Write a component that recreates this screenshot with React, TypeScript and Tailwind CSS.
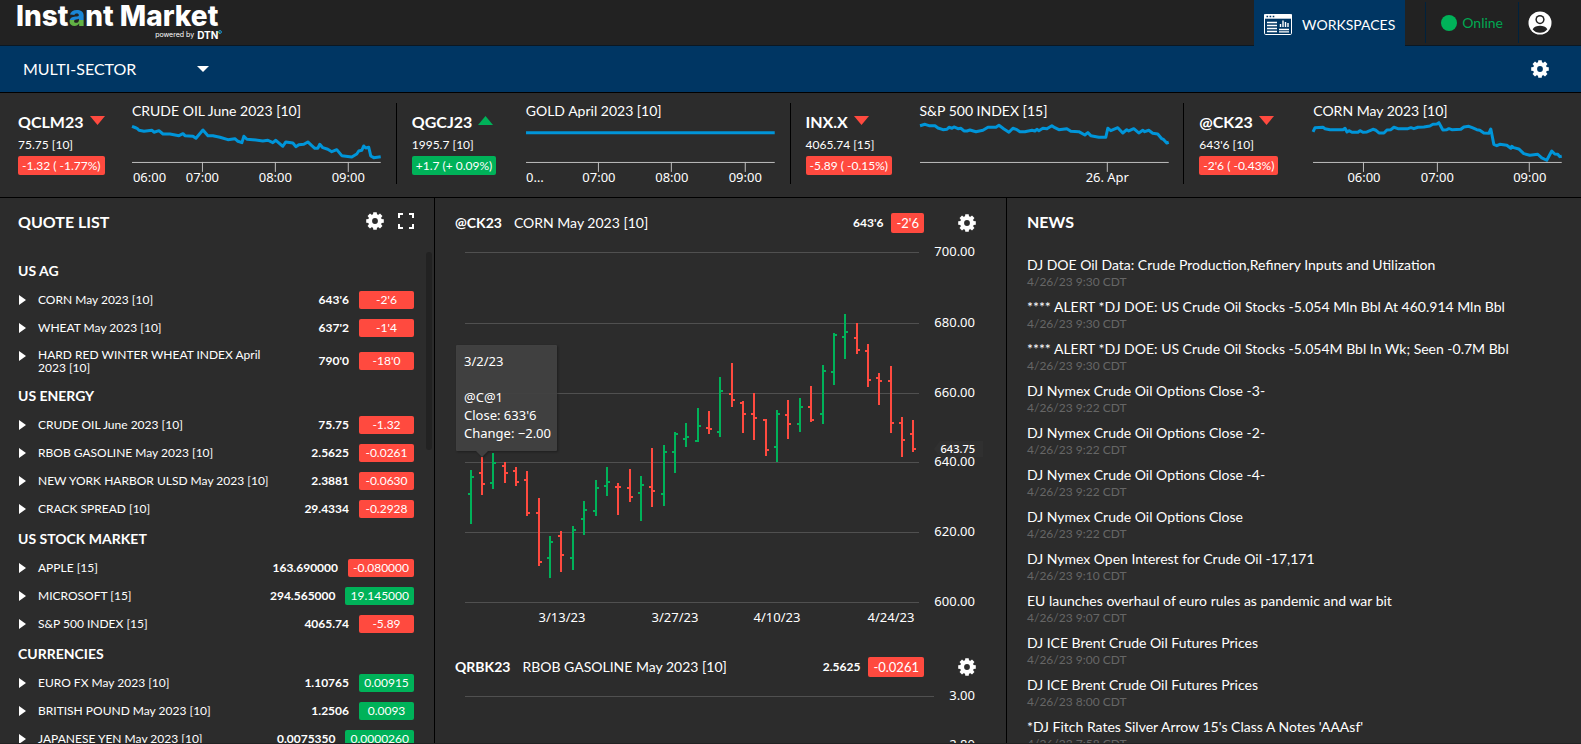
import clsx from "clsx";
import { useState } from "react";

type Spark = {
  points: string;
  ticks: number[];
  labels: { x: number; text: string; anchor?: "start" | "middle" }[];
};

type Ticker = {
  symbol: string;
  title: string;
  price: string;
  change: string;
  up?: boolean;
  spark: Spark;
};

const TICKERS: Ticker[] = [
  {
    symbol: "QCLM23",
    title: "CRUDE OIL June 2023 [10]",
    price: "75.75 [10]",
    change: "-1.32 ( -1.77%)",
    spark: {
      points:
        "0,8.3 3,9.5 5,10.3 7,12.3 12,13.3 20,12.3 22,14.3 27,12.7 31,16 38,16 47,17.7 51,15.7 53,17.7 61,18.3 64,20.3 71,12 76,17.7 81,17.7 88,19.3 96,21.7 103,20.7 106,23.3 110,24.7 112,18.3 115,21.3 121,21.7 131,23 136,22.3 141,24.7 144,22.3 151,28.3 154,24 161,25 164,28.7 167,26.7 172,26.3 176,24 180,27.7 183,30.3 186,30.3 188,26.3 191,29.7 196,31.3 200,33.7 205,31.7 210,37.7 220,39 225,36 227,33 230,32.3 232,28 234,30 237,29.3 239,38 242,39.7 249,38.7",
      ticks: [70.5, 143.5, 216.5],
      labels: [
        { x: 17.5, text: "06:00" },
        { x: 70.5, text: "07:00" },
        { x: 143.5, text: "08:00" },
        { x: 216.5, text: "09:00" },
      ],
    },
  },
  {
    symbol: "QGCJ23",
    title: "GOLD April 2023 [10]",
    price: "1995.7 [10]",
    change: "+1.7 (+ 0.09%)",
    up: true,
    spark: {
      points: "0,14.7 249,14.7",
      ticks: [72.5, 145.5, 219.5],
      labels: [
        { x: 0, text: "0…", anchor: "start" },
        { x: 73, text: "07:00" },
        { x: 146, text: "08:00" },
        { x: 219.5, text: "09:00" },
      ],
    },
  },
  {
    symbol: "INX.X",
    title: "S&P 500 INDEX [15]",
    price: "4065.74 [15]",
    change: "-5.89 ( -0.15%)",
    spark: {
      points:
        "0,7.7 5,6.3 9,7.7 15,7.7 18,10 23,11.7 27,11.3 29,9.3 32,10.3 34,9 38,10.7 41,10.3 44,13 47,13 50,12 56,13.7 63,12.3 68,9.3 76,9.3 79,7.3 84,11 89,14.3 93,10.3 97,11.7 100,13.7 105,13.7 112,12.3 115,13 117,11.3 119,12.7 123,10.3 127,10.7 132,7.7 135,9.7 139,11.7 147,10.7 151,13.3 159,13.7 165,17 168,14.7 171,17.7 179,19.3 186,19.3 188,10.3 191,12.7 198,9.7 203,15 207,11.7 209,13 214,10.7 219,15 223,12.3 225,13.7 229,12.3 233,15.3 238,16 242,20.7 244,21.7 247,25 249,24.3",
      ticks: [187.5],
      labels: [{ x: 187.5, text: "26. Apr" }],
    },
  },
  {
    symbol: "@CK23",
    title: "CORN May 2023 [10]",
    price: "643'6 [10]",
    change: "-2'6 ( -0.43%)",
    spark: {
      points:
        "0,14 2,9.7 10,9.3 12,10.7 17,11.7 30,11.7 32,10.3 34,14 36,12.7 39,14.3 45,14.3 47,12.7 50,14.3 54,14 60,11.3 63,12.3 66,15 71,15 74,12 78,11.7 81,9.3 85,10.7 95,10.7 98,9.7 101,10.7 105,9.3 111,9 117,8 120,6.3 124,6 126,4.7 130,12 134,11.7 136,10.7 139,11.7 148,11.3 151,9 156,8.3 160,10 164,11.7 167,12.3 171,15 176,15.3 178,11 181,26.3 184,27.7 187,26.3 194,27.3 198,30.3 199,28.3 201,29.7 206,31 211,35.7 217,37.3 225,36.3 229,40 234,42.3 239,33 242,36 245,36.3 247,38.7 249,38.3",
      ticks: [50.5, 124.5, 216.5],
      labels: [
        { x: 51, text: "06:00" },
        { x: 124.5, text: "07:00" },
        { x: 217, text: "09:00" },
      ],
    },
  },
];

const QUOTES = [
  {
    group: "US AG",
    rows: [
      ["CORN May 2023 [10]", "643'6", "-2'6"],
      ["WHEAT May 2023 [10]", "637'2", "-1'4"],
      ["HARD RED WINTER WHEAT INDEX April 2023 [10]", "790'0", "-18'0"],
    ],
  },
  {
    group: "US ENERGY",
    rows: [
      ["CRUDE OIL June 2023 [10]", "75.75", "-1.32"],
      ["RBOB GASOLINE May 2023 [10]", "2.5625", "-0.0261"],
      ["NEW YORK HARBOR ULSD May 2023 [10]", "2.3881", "-0.0630"],
      ["CRACK SPREAD [10]", "29.4334", "-0.2928"],
    ],
  },
  {
    group: "US STOCK MARKET",
    rows: [
      ["APPLE [15]", "163.690000", "-0.080000"],
      ["MICROSOFT [15]", "294.565000", "19.145000"],
      ["S&P 500 INDEX [15]", "4065.74", "-5.89"],
    ],
  },
  {
    group: "CURRENCIES",
    rows: [
      ["EURO FX May 2023 [10]", "1.10765", "0.00915"],
      ["BRITISH POUND May 2023 [10]", "1.2506", "0.0093"],
      ["JAPANESE YEN May 2023 [10]", "0.0075350", "0.0000260"],
    ],
  },
];

const NEWS = [
  ["DJ DOE Oil Data: Crude Production,Refinery Inputs and Utilization", "4/26/23 9:30 CDT"],
  ["**** ALERT *DJ DOE: US Crude Oil Stocks -5.054 Mln Bbl At 460.914 Mln Bbl", "4/26/23 9:30 CDT"],
  ["**** ALERT *DJ DOE: US Crude Oil Stocks -5.054M Bbl In Wk; Seen -0.7M Bbl", "4/26/23 9:30 CDT"],
  ["DJ Nymex Crude Oil Options Close -3-", "4/26/23 9:22 CDT"],
  ["DJ Nymex Crude Oil Options Close -2-", "4/26/23 9:22 CDT"],
  ["DJ Nymex Crude Oil Options Close -4-", "4/26/23 9:22 CDT"],
  ["DJ Nymex Crude Oil Options Close", "4/26/23 9:22 CDT"],
  ["DJ Nymex Open Interest for Crude Oil -17,171", "4/26/23 9:10 CDT"],
  ["EU launches overhaul of euro rules as pandemic and war bit", "4/26/23 9:07 CDT"],
  ["DJ ICE Brent Crude Oil Futures Prices", "4/26/23 9:00 CDT"],
  ["DJ ICE Brent Crude Oil Futures Prices", "4/26/23 8:00 CDT"],
  ["*DJ Fitch Rates Silver Arrow 15's Class A Notes 'AAAsf'", "4/26/23 7:58 CDT"],
];

// x, high, low, open, close (chart units, y grows downwards)
const BARS = [
  [471, 470, 524, 494, 477],
  [482, 457, 495, 473, 484],
  [493, 453, 489, 483, 463],
  [505, 462, 483, 466, 473],
  [516, 467, 486, 471, 482],
  [527, 471, 516, 480, 513],
  [539, 498, 566, 513, 562],
  [550, 536, 578, 558, 542],
  [561, 531, 572, 536, 555],
  [573, 526, 570, 558, 530],
  [584, 501, 535, 519, 510],
  [596, 480, 516, 511, 488],
  [607, 467, 496, 486, 482],
  [618, 483, 515, 487, 487],
  [630, 469, 502, 488, 497],
  [641, 476, 521, 493, 485],
  [652, 448, 507, 487, 491],
  [664, 445, 506, 494, 452],
  [675, 432, 473, 452, 434],
  [686, 423, 447, 439, 437],
  [698, 408, 442, 441, 426],
  [709, 411, 434, 428, 429],
  [720, 377, 437, 432, 391],
  [732, 363, 407, 394, 400],
  [743, 401, 433, 403, 414],
  [754, 393, 440, 414, 418],
  [766, 419, 456, 420, 450],
  [777, 410, 462, 447, 414],
  [788, 400, 439, 415, 424],
  [800, 398, 432, 424, 407],
  [811, 386, 422, 407, 420],
  [823, 365, 424, 414, 371],
  [834, 333, 385, 372, 335],
  [845, 314, 359, 337, 332],
  [857, 323, 354, 338, 350],
  [868, 344, 387, 351, 380],
  [879, 373, 405, 378, 381],
  [891, 366, 433, 381, 423],
  [902, 417, 457, 423, 440],
  [913, 420, 452, 434, 449],
];

const GRID = [
  { y: 252.5, label: "700.00" },
  { y: 323.5, label: "680.00" },
  { y: 393.5, label: "660.00" },
  { y: 462.5, label: "640.00" },
  { y: 532.5, label: "620.00" },
  { y: 602.5, label: "600.00" },
];

const GearIcon = () => (
  <svg viewBox="0 0 18 18" className="size-[18px]" aria-hidden="true">
    <circle cx="9" cy="9" r="4.9" fill="none" stroke="#fff" strokeWidth="4" />
    {[0, 45, 90, 135, 180, 225, 270, 315].map((a) => (
      <path key={a} d="M6.9 3 L7.3 0.2 H10.7 L11.1 3Z" fill="#fff" transform={`rotate(${a} 9 9)`} />
    ))}
  </svg>
);

const GearButton = ({ label }: { label: string }) => (
  <button aria-label={label} className="shrink-0 cursor-pointer">
    <GearIcon />
  </button>
);

function Header() {
  return (
    <header className="flex h-[46px] justify-between border-b border-[#0b1823] bg-[#222]">
      <a href="#" className="flex flex-col pl-[16px] text-white">
        <span className="pr-1 font-['Inter'] text-[28px] leading-[32px] font-extrabold">
          Inst
          <span className="bg-linear-to-b from-[#1b87d6] from-62% to-[#62b345] to-62% bg-clip-text text-transparent">
            a
          </span>
          nt Market
        </span>
        <span className="-mt-[2px] flex items-center justify-end gap-[3px] font-['Inter'] text-[7px] leading-[10px]">
          powered by
          <span className="flex items-start text-[10px] font-bold">
            DTN
            <svg viewBox="0 0 4 4" className="size-1" aria-hidden="true">
              <circle cx="2" cy="2" r="1.4" fill="none" stroke="#1b9ad6" strokeWidth="1" />
              <path d="M0.6 2 A1.4 1.4 0 0 0 2 3.4" fill="none" stroke="#62b345" />
            </svg>
          </span>
        </span>
      </a>
      <div className="flex">
        <a href="#" className="mr-5 flex h-[48px] items-center gap-[10px] bg-[#003663] px-[10px] text-[14px] text-white">
          <svg viewBox="0 0 28 21" className="h-[21px] w-7" fill="none" stroke="#fff" aria-hidden="true">
            <rect x="0.5" y="0.5" width="27" height="20" rx="1.2" />
            <path d="M0 2.5H28" strokeWidth="4.4" />
            <path d="M2.5 2.5h1.6M5.6 2.5h1.6M8.7 2.5h1.6" stroke="#003663" strokeWidth="1.4" />
            <path d="M3 8.5H13M3 11.5H13M3 14.5H13M3 17.5H13M15 15.5H25M15 17.8H25" strokeWidth="1.3" />
            <path d="M16.5 13V10M19 13V6.5M21.5 13V8M24 13V9" strokeWidth="1.4" />
          </svg>
          WORKSPACES
        </a>
        <div className="my-[2px] flex items-center gap-[5px] border-x border-[#00223d] px-[15px] text-[14px] text-[#00a852]">
          <span className="size-4 rounded-full bg-[#00b259]" />
          Online
        </div>
        <button aria-label="Account" className="mr-[29px] ml-[9px] cursor-pointer">
          <svg viewBox="0 0 24 24" className="size-6" aria-hidden="true">
            <circle cx="12" cy="12" r="11.5" fill="#fff" />
            <circle cx="12" cy="8.6" r="4.6" fill="#222" />
            <circle cx="12" cy="8.6" r="3.1" fill="#fff" />
            <path d="M4.6 18.2c1.6-2.6 4.4-3.4 7.4-3.4s5.8.8 7.4 3.4c-1.8 2.3-4.4 3.6-7.4 3.6s-5.6-1.3-7.4-3.6z" fill="#222" />
          </svg>
        </button>
      </div>
    </header>
  );
}

function WorkspaceBar() {
  const [workspace, setWorkspace] = useState("MULTI-SECTOR");

  return (
    <div className="flex h-[47px] items-center justify-between border-b border-black bg-[#003663] pr-8 pl-[23px]">
      <label className="flex items-center">
        <select
          aria-label="Workspace"
          value={workspace}
          onChange={(e) => setWorkspace(e.target.value)}
          className="w-[174px] cursor-pointer appearance-none bg-transparent text-[16px] text-white outline-none"
        >
          <option>MULTI-SECTOR</option>
        </select>
        <svg viewBox="0 0 12 6" className="h-[6px] w-3" aria-hidden="true">
          <path d="M0 0H12L6 6Z" fill="#fff" />
        </svg>
      </label>
      <GearButton label="Workspace settings" />
    </div>
  );
}

const Sparkline = ({ spark }: { spark: Spark }) => (
  <svg viewBox="0 0 249 66" className="w-full overflow-visible" aria-hidden="true">
    <polyline points={spark.points} fill="none" stroke="#0095d9" strokeWidth="3" strokeLinejoin="round" />
    <path d="M0 44.5H249" stroke="#c0c0c0" />
    {spark.ticks.map((x) => (
      <path key={x} d={`M${x} 44V54`} stroke="#c0c0c0" />
    ))}
    {spark.labels.map((l) => (
      <text
        key={l.text}
        x={l.x}
        y="64"
        textAnchor={l.anchor ?? "middle"}
        className="fill-white font-['Noto_Sans'] text-[13px]"
      >
        {l.text}
      </text>
    ))}
  </svg>
);

const TickerCell = ({ ticker }: { ticker: Ticker }) => (
  <li className="flex min-w-0 flex-1 border-r border-black pr-[15px] pl-[15px] last:border-r-0">
    <div className="flex w-[114px] shrink-0 flex-col items-start pt-2 text-[12px]">
      <div className="flex items-center gap-[6px] text-[16px] leading-[22px] font-bold">
        {ticker.symbol}
        <svg viewBox="0 0 15 9" className="mb-1 h-[9px] w-[15px]" aria-hidden="true">
          {ticker.up ? (
            <path d="M0 9H15L7.5 0Z" fill="#00b259" />
          ) : (
            <path d="M0 0H15L7.5 9Z" fill="#ff4a3f" />
          )}
        </svg>
      </div>
      <div className="leading-[23px]">{ticker.price}</div>
      <div
        className={clsx(
          "rounded-[2px] px-1 leading-[19px] whitespace-nowrap",
          ticker.up ? "bg-[#00b259]" : "bg-[#ff4a3f]"
        )}
      >
        {ticker.change}
      </div>
    </div>
    <div className="min-w-0 flex-1">
      <div className="h-[15px] text-[14px] leading-[16px] whitespace-nowrap">{ticker.title}</div>
      <Sparkline spark={ticker.spark} />
    </div>
  </li>
);

function QuoteRow({ name, price, change }: { name: string; price: string; change: string }) {
  return (
    <li className="flex min-h-7 text-[12px] leading-[13px]">
      <button aria-label={`Expand ${name}`} className="h-7 w-5 shrink-0 cursor-pointer">
        <svg viewBox="0 0 7 10" className="ml-px h-[10px] w-[7px]" aria-hidden="true">
          <path d="M0 0L7 5L0 10Z" fill="#fff" />
        </svg>
      </button>
      <div className="flex flex-1 items-center py-[6px]">
        <span className="max-w-[240px]">{name}</span>
      </div>
      <div className="flex items-center gap-[10px]">
        <span className="font-bold">{price}</span>
        <span
          className={clsx(
            "min-w-[55px] rounded-[2px] px-[5px] text-center leading-[18px]",
            change.startsWith("-") ? "bg-[#ff4a3f]" : "bg-[#00b259]"
          )}
        >
          {change}
        </span>
      </div>
    </li>
  );
}

function QuoteList() {
  return (
    <section className="relative w-[435px] shrink-0 overflow-hidden border-r border-black pr-5 pl-[18px]">
      <div className="flex h-[57px] items-start justify-between pt-[14px]">
        <h2 className="text-[16px] leading-[20px] font-bold">QUOTE LIST</h2>
        <div className="flex items-center gap-[14px]">
          <GearButton label="Quote list settings" />
          <button aria-label="Full screen" className="cursor-pointer">
            <svg viewBox="0 0 16 16" className="size-4" fill="none" stroke="#fff" strokeWidth="2" aria-hidden="true">
              <path d="M1 5V1H5M11 1H15V5M15 11V15H11M5 15H1V11" />
            </svg>
          </button>
        </div>
      </div>
      {QUOTES.map(({ group, rows }) => (
        <div key={group}>
          <h3 className="text-[14px] leading-[31px] font-bold">{group}</h3>
          <ul>
            {rows.map(([name, price, change]) => (
              <QuoteRow key={name} name={name} price={price} change={change} />
            ))}
          </ul>
        </div>
      ))}
      <div className="absolute top-[54px] right-[2px] h-[198px] w-[6px] rounded-full bg-[#222]" />
    </section>
  );
}

const ChartHeader = ({
  symbol,
  title,
  price,
  change,
}: {
  symbol: string;
  title: string;
  price: string;
  change: string;
}) => (
  <div className="flex h-5 items-center pr-[10px]">
    <h2 className="text-[14px] font-bold">{symbol}</h2>
    <span className="ml-3 flex-1 text-[14px]">{title}</span>
    <span className="mr-2 text-[12px] font-bold">{price}</span>
    <span className="mr-[34px] rounded-[2px] bg-[#ff4a3f] px-[5px] text-[13px] leading-[20px]">{change}</span>
    <GearButton label={`${symbol} settings`} />
  </div>
);

const CornChart = () => (
  <svg
    viewBox="455 233 531 400"
    className="w-full fill-white font-['Noto_Sans'] text-[13px]"
    role="img"
    aria-label="CORN May 2023 daily prices"
  >
    {GRID.map(({ y, label }) => (
      <g key={label}>
        <path d={`M465 ${y}H919`} stroke="#505050" />
        <text x="975" y={y + 3.5} textAnchor="end">
          {label}
        </text>
      </g>
    ))}
    {BARS.map(([x, high, low, open, close]) => (
      <path
        key={x}
        d={`M${x} ${high}V${low}M${x - 3} ${open}H${x}M${x} ${close}H${x + 3}`}
        fill="none"
        strokeWidth="2"
        stroke={close < open ? "#00b259" : "#ff4a3f"}
      />
    ))}
    <text x="562" y="622" textAnchor="middle">3/13/23</text>
    <text x="675" y="622" textAnchor="middle">3/27/23</text>
    <text x="777" y="622" textAnchor="middle">4/10/23</text>
    <text x="891" y="622" textAnchor="middle">4/24/23</text>

    {/* last price */}
    <path d="M934 449L940 441H983V457H940Z" fill="#303030" />
    <text x="975" y="453" textAnchor="end" className="text-[11px] font-medium">643.75</text>

    {/* tooltip */}
    <path
      d="M457 345H556Q557 345 557 346V450Q557 451 556 451H488L482 457L476 451H457Q456 451 456 450V346Q456 345 457 345Z"
      fill="#424242"
      fillOpacity="0.95"
      className="drop-shadow-[1px_1px_1px_rgba(0,0,0,0.35)]"
    />
    <text x="464" y="366">3/2/23</text>
    <text x="464" y="402">@C@1</text>
    <text x="464" y="420">Close: 633'6</text>
    <text x="464" y="438">Change: −2.00</text>
  </svg>
);

const GasolineChart = () => (
  <svg
    viewBox="455 678 531 90"
    className="w-full fill-white font-['Noto_Sans'] text-[13px]"
    role="img"
    aria-label="RBOB GASOLINE May 2023 daily prices"
  >
    <path d="M465 697.5H934" stroke="#505050" />
    <text x="975" y="701" textAnchor="end">3.00</text>
    <text x="975" y="750" textAnchor="end">2.80</text>
  </svg>
);

function Charts() {
  return (
    <section className="min-w-0 flex-1 overflow-hidden border-r border-black pt-[15px] pr-5 pl-5">
      <ChartHeader symbol="@CK23" title="CORN May 2023 [10]" price="643'6" change="-2'6" />
      <div className="mb-6">
        <CornChart />
      </div>
      <ChartHeader symbol="QRBK23" title="RBOB GASOLINE May 2023 [10]" price="2.5625" change="-0.0261" />
      <GasolineChart />
    </section>
  );
}

function News() {
  return (
    <section className="w-[574px] shrink-0 overflow-hidden pt-[14px] pl-5">
      <h2 className="mb-[23px] text-[16px] leading-[20px] font-bold">NEWS</h2>
      <ul>
        {NEWS.map(([title, time], i) => (
          <li key={i} className="h-[42px]">
            <a href="#" className="block text-[14px] leading-[19px]">
              {title}
            </a>
            <time className="block text-[12px] leading-[16px] text-[#666]">{time}</time>
          </li>
        ))}
      </ul>
    </section>
  );
}

export default function App() {
  return (
    <div className="flex h-screen flex-col overflow-hidden border-b border-[#222] bg-[#2c2c2c] font-['Lato',sans-serif] text-white">
      <Header />
      <WorkspaceBar />
      <ul className="flex border-b border-black pt-[10px] pr-1 pb-[13px] pl-[3px]">
        {TICKERS.map((t) => (
          <TickerCell key={t.symbol} ticker={t} />
        ))}
      </ul>
      <main className="flex min-h-0 flex-1">
        <QuoteList />
        <Charts />
        <News />
      </main>
    </div>
  );
}
